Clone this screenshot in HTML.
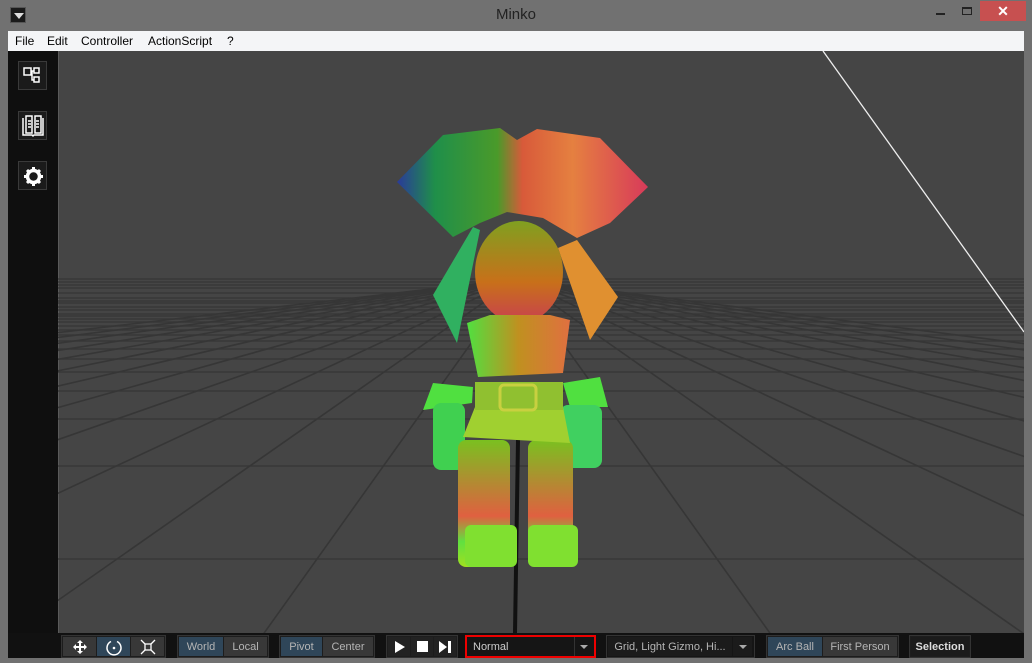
<!DOCTYPE html>
<html style="width:1032px;height:663px;overflow:hidden"><head><meta charset="utf-8"><style>
*{margin:0;padding:0;box-sizing:border-box}
body{width:1032px;height:663px;background:#717171;position:relative;overflow:hidden;font-family:"Liberation Sans",sans-serif}
.title{position:absolute;top:6px;left:0;width:1032px;text-align:center;font-size:15px;color:#222}
.menu{position:absolute;left:8px;top:31px;width:1016px;height:20px;background:#f4f5f7;font-size:12px;color:#000}
.menu span{position:absolute;top:3px}
.side{position:absolute;left:8px;top:51px;width:50px;height:582px;background:#0f0f0f}
.sbtn{position:absolute;left:10px;width:29px;height:29px;border:1px solid #3a3a3a;background:#1b1b1b}
.bar{position:absolute;left:8px;top:633px;width:1016px;height:25px;background:#111;overflow:hidden}
.g{position:absolute;top:2px;height:23px;border:1px solid #333;background:#1d1d1d;display:flex;padding:1px;gap:1px}
.b{height:19px;background:#383838;color:#b5b5b5;font-size:11px;display:flex;align-items:center;justify-content:center}
.sel{background:#2f4659}
</style></head><body>
<div style="position:absolute;left:10px;top:7px;width:16px;height:16px;background:#1a1a1a;border:1px solid #555"><div style="margin:5px 0 0 3px;width:0;height:0;border-left:5px solid transparent;border-right:5px solid transparent;border-top:6px solid #ddd"></div></div>
<div class="title">Minko</div>
<div style="position:absolute;left:936px;top:13px;width:9px;height:2px;background:#222"></div>
<div style="position:absolute;left:962px;top:7px;width:10px;height:8px;border:1px solid #222;border-top-width:2px"></div>
<div style="position:absolute;left:980px;top:1px;width:46px;height:20px;background:#c75050;color:#fff;font-size:14px;text-align:center;line-height:20px;font-weight:bold">✕</div>
<div class="menu"><span style="left:7px">File</span><span style="left:39px">Edit</span><span style="left:73px">Controller</span><span style="left:140px">ActionScript</span><span style="left:219px">?</span></div>
<div class="side">
<div class="sbtn" style="top:10px"><svg width="29" height="29"><g fill="none" stroke="#fff" stroke-width="1.5"><rect x="5" y="6" width="7" height="7"/><rect x="15" y="6" width="5" height="5"/><rect x="15" y="15" width="5" height="5"/><path d="M12 9h3M13 9v9h2"/></g></svg></div>
<div class="sbtn" style="top:60px"><svg width="29" height="29"><g fill="none" stroke="#fff" stroke-width="1.5"><path d="M4 6v17h9l1 1 1-1h9V6"/><path d="M7 4h6v17H7zM16 4h6v17h-6z"/><path d="M9 9h3M9 12h3M9 15h3M17 9h3M17 12h3M17 15h3"/></g></svg></div>
<div class="sbtn" style="top:110px"><svg width="29" height="29"><circle cx="14.5" cy="14.5" r="6" fill="none" stroke="#fff" stroke-width="3.5"/><g stroke="#fff" stroke-width="3"><path d="M14.5 5v4M14.5 20v4M5 14.5h4M20 14.5h4M8 8l3 3M18 18l3 3M21 8l-3 3M8 21l3-3"/></g><circle cx="14.5" cy="14.5" r="2.5" fill="#1b1b1b"/></svg></div>
</div>
<svg style="position:absolute;left:58px;top:51px" width="966" height="582" viewBox="58 51 966 582">
<rect x="58" y="51" width="966" height="582" fill="#454545"/>
<rect x="58" y="51" width="1" height="582" fill="#5a5a5a"/>
<g stroke="#363636" stroke-width="1.3">
<path d="M58 279H1024M58 282H1024M58 285H1024M58 288H1024M58 293H1024M58 298H1024M58 301H1024M58 303H1024M58 307H1024M58 310H1024M58 314H1024M58 316H1024M58 319H1024M58 322H1024M58 326H1024M58 330H1024M58 335H1024M58 341H1024M58 349H1024M58 359H1024M58 372H1024M58 391H1024M58 419H1024M58 466H1024M58 559H1024"/>
</g>
<g stroke="#363636" stroke-width="1.6">
<path d="M517 279L-4283 839M517 279L-3883 839M517 279L-3483 839M517 279L-3083 839M517 279L-2683 839M517 279L-2283 839M517 279L-1883 839M517 279L-1483 839M517 279L-1083 839M517 279L-683 839M517 279L-283 839M517 279L117 839M517 279L917 839M517 279L1317 839M517 279L1717 839M517 279L2117 839M517 279L2517 839M517 279L2917 839M517 279L3317 839M517 279L3717 839M517 279L4117 839M517 279L4517 839M517 279L4917 839"/>
</g>
<path d="M823 51L1024 332" stroke="#eee" stroke-width="1.3"/>
<path d="M518 440L515 633" stroke="#111" stroke-width="4"/>
<defs>
<linearGradient id="hat" x1="0" x2="1"><stop offset="0" stop-color="#2a3a9a"/><stop offset=".15" stop-color="#1f8f4a"/><stop offset=".4" stop-color="#4a9a2a"/><stop offset=".5" stop-color="#d85a3a"/><stop offset=".7" stop-color="#e58040"/><stop offset="1" stop-color="#d83a5a"/></linearGradient>
<linearGradient id="head" x1="0" y1="0" x2="0" y2="1"><stop offset="0" stop-color="#80a020"/><stop offset=".6" stop-color="#c8701a"/><stop offset="1" stop-color="#c84050"/></linearGradient>
<linearGradient id="body" x1="0" x2="1"><stop offset="0" stop-color="#50e040"/><stop offset=".5" stop-color="#c09020"/><stop offset="1" stop-color="#e07040"/></linearGradient>
<linearGradient id="leg" x1="0" y1="0" x2="0" y2="1"><stop offset="0" stop-color="#7ac020"/><stop offset=".6" stop-color="#e06040"/><stop offset=".8" stop-color="#60e040"/><stop offset="1" stop-color="#a0e020"/></linearGradient>
</defs>
<polygon points="433,295 473,227 480,230 457,343" fill="#30b060"/>
<polygon points="558,248 577,240 618,297 590,340" fill="#e09030"/>
<ellipse cx="519" cy="272" rx="44" ry="51" fill="url(#head)"/>
<polygon points="397,182 443,135 500,128 517,140 537,129 600,138 648,187 610,223 577,238 543,218 507,212 480,223 453,237" fill="url(#hat)"/>
<polygon points="467,323 490,315 550,315 570,320 563,373 478,377" fill="url(#body)"/>
<polygon points="423,410 433,383 473,387 472,403" fill="#50e040"/>
<rect x="433" y="403" width="32" height="67" rx="8" fill="#40d050"/>
<polygon points="563,383 600,377 608,407 570,407" fill="#50e040"/>
<rect x="560" y="405" width="42" height="63" rx="8" fill="#40d060"/>
<rect x="458" y="440" width="52" height="127" rx="8" fill="url(#leg)"/>
<rect x="528" y="440" width="45" height="127" rx="8" fill="url(#leg)"/>
<rect x="465" y="525" width="52" height="42" rx="6" fill="#80e030"/>
<rect x="528" y="525" width="50" height="42" rx="6" fill="#80e030"/>
<polygon points="475,407 563,407 570,443 463,437" fill="#a0d030"/>
<rect x="475" y="382" width="88" height="28" fill="#90c030"/>
<rect x="500" y="385" width="36" height="25" rx="4" fill="none" stroke="#c8d040" stroke-width="3"/>
</svg>
<div class="bar">
<div class="g" style="left:53px"><div class="b" style="width:33px"><svg width="18" height="18"><g fill="#fff"><path d="M9 2l3 3H6zM9 16l3-3H6zM2 9l3-3v6zM16 9l-3-3v6z"/><rect x="8" y="5" width="2" height="8"/><rect x="5" y="8" width="8" height="2"/></g></svg></div><div class="b sel" style="width:33px"><svg width="18" height="18"><path d="M6 3.5A7 7 0 1 0 12 3.5" fill="none" stroke="#fff" stroke-width="1.5"/><circle cx="9" cy="10" r="1.3" fill="#fff"/></svg></div><div class="b" style="width:33px"><svg width="18" height="18"><g fill="none" stroke="#fff" stroke-width="1.3"><rect x="6" y="6" width="6" height="6"/><path d="M2 2l4 4M16 2l-4 4M2 16l4-4M16 16l-4-4"/></g></svg></div></div>
<div class="g" style="left:169px"><div class="b sel" style="width:44px">World</div><div class="b" style="width:43px">Local</div></div>
<div class="g" style="left:271px"><div class="b sel" style="width:41px">Pivot</div><div class="b" style="width:50px">Center</div></div>
<div class="g" style="left:378px"><div class="b" style="width:22px;background:#222"><svg width="12" height="12"><path d="M2 0v12l10-6z" fill="#fff"/></svg></div><div class="b" style="width:22px;background:#222"><div style="width:11px;height:11px;background:#fff"></div></div><div class="b" style="width:22px;background:#222"><svg width="12" height="12"><path d="M0 0v12l8-6zM9 0h3v12H9z" fill="#fff"/></svg></div></div>
<div class="g" style="left:457px;width:131px;border:2px solid #e00;padding:0;background:#151515"><div class="b" style="width:106px;justify-content:flex-start;padding-left:6px;background:#151515;color:#ccc;height:19px">Normal</div><div class="b" style="width:19px;background:#151515;border-left:1px solid #333"><div style="border-left:4px solid transparent;border-right:4px solid transparent;border-top:4px solid #aaa"></div></div></div>
<div class="g" style="left:598px;width:149px;background:#151515"><div class="b" style="width:124px;background:#1b1b1b">Grid, Light Gizmo, Hi...</div><div class="b" style="width:19px;background:#1b1b1b"><div style="border-left:4px solid transparent;border-right:4px solid transparent;border-top:4px solid #aaa"></div></div></div>
<div class="g" style="left:758px"><div class="b sel" style="width:54px">Arc Ball</div><div class="b" style="width:74px">First Person</div></div>
<div class="g" style="left:901px"><div class="b" style="width:58px;background:#1b1b1b;color:#ddd;font-weight:bold">Selection</div></div>
</div>
</body></html>
